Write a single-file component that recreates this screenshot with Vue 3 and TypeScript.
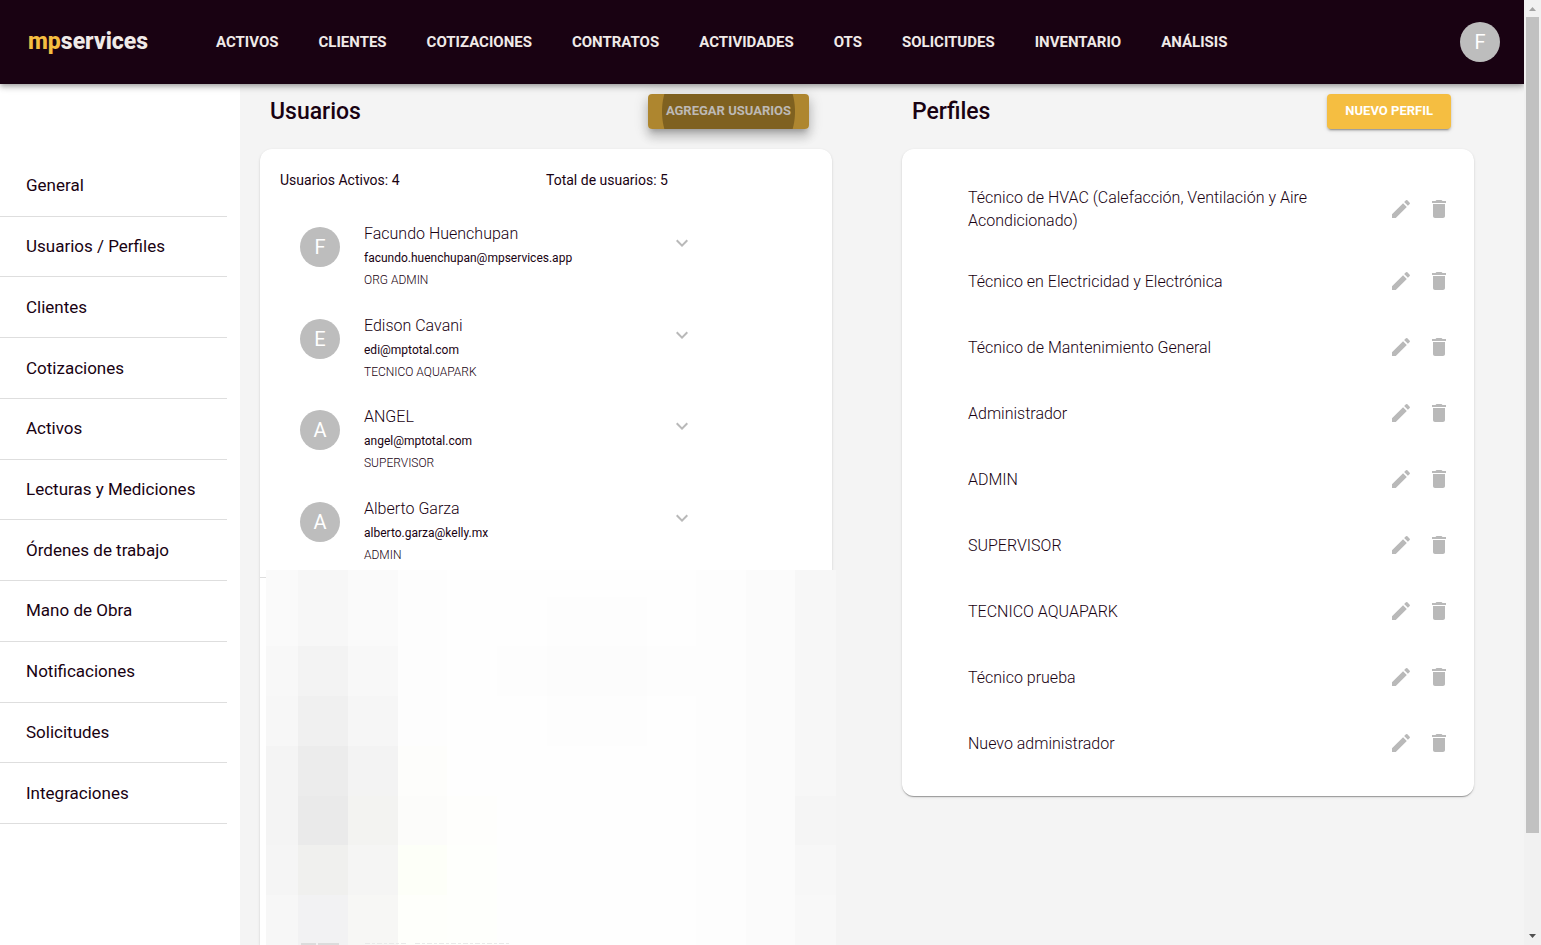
<script setup lang="ts">
interface User {
  name: string
  email: string
  role: string
}

interface Tile {
  x: number
  y: number
  w: number
  h: number
  fill: string
}

const navItems: string[] = [
  'ACTIVOS', 'CLIENTES', 'COTIZACIONES', 'CONTRATOS', 'ACTIVIDADES',
  'OTS', 'SOLICITUDES', 'INVENTARIO', 'ANÁLISIS',
]

const sideItems: string[] = [
  'General', 'Usuarios / Perfiles', 'Clientes', 'Cotizaciones', 'Activos',
  'Lecturas y Mediciones', 'Órdenes de trabajo', 'Mano de Obra',
  'Notificaciones', 'Solicitudes', 'Integraciones',
]

const users: User[] = [
  { name: 'Facundo Huenchupan', email: 'facundo.huenchupan@mpservices.app', role: 'ORG ADMIN' },
  { name: 'Edison Cavani', email: 'edi@mptotal.com', role: 'TECNICO AQUAPARK' },
  { name: 'ANGEL', email: 'angel@mptotal.com', role: 'SUPERVISOR' },
  { name: 'Alberto Garza', email: 'alberto.garza@kelly.mx', role: 'ADMIN' },
]

const profiles: string[] = [
  'Técnico de HVAC (Calefacción, Ventilación y Aire Acondicionado)',
  'Técnico en Electricidad y Electrónica',
  'Técnico de Mantenimiento General',
  'Administrador',
  'ADMIN',
  'SUPERVISOR',
  'TECNICO AQUAPARK',
  'Técnico prueba',
  'Nuevo administrador',
]

// Mosaic that hides the inactive user: column and row edges, then one colour per cell.
const colEdges = [0, 32, 82, 132, 181, 231, 281, 381, 430, 480, 529, 570]
const rowEdges = [0, 27, 76, 126, 176, 226, 275, 325, 375]
const cells: string[][] = [
  ['#fafafa', '#f7f7f7', '#fafafa', '#fdfdfd', '#fefefe', '#fefefe', '#fefefe', '#fefefe', '#fdfdfd', '#fbfbfb', '#f7f7f7'],
  ['#fafafa', '#f7f7f7', '#fafafa', '#fdfdfd', '#fefefe', '#fefefe', '#fdfdfd', '#fefefe', '#fdfdfd', '#fbfbfb', '#f7f7f7'],
  ['#f8f8f8', '#f3f3f3', '#f8f8f8', '#fdfdfd', '#fefefe', '#fdfdfd', '#fcfcfc', '#fdfdfd', '#fdfdfd', '#fbfbfb', '#f7f7f7'],
  ['#f7f7f7', '#f0f0f0', '#f6f6f6', '#fdfdfd', '#fefefe', '#fefefe', '#fdfdfd', '#fefefe', '#fdfdfd', '#fbfbfb', '#f7f7f7'],
  ['#f4f4f4', '#ececec', '#f3f3f3', '#fdfdfb', '#fefefe', '#fefefe', '#fefefe', '#fefefe', '#fdfdfd', '#fbfbfb', '#f7f7f7'],
  ['#f4f4f4', '#eaeaea', '#f3f3f1', '#fcfcfa', '#fefefc', '#fefefe', '#fefefe', '#fefefe', '#fdfdfd', '#fbfbfb', '#f5f5f5'],
  ['#f5f5f5', '#f0f0ee', '#f5f5f4', '#fdfff8', '#fefffc', '#fefefe', '#fefefe', '#fefefe', '#fdfdfd', '#fbfbfb', '#f7f7f7'],
  ['#f7f7f7', '#f2f2f3', '#f7f7f5', '#fefffb', '#fefffc', '#fefefe', '#fefefe', '#fefefe', '#fdfdfd', '#fbfbfb', '#f8f8f8'],
]

const tiles: Tile[] = cells.flatMap((row, r) =>
  row.map((fill, c) => ({
    x: colEdges[c],
    y: rowEdges[r],
    w: colEdges[c + 1] - colEdges[c],
    h: rowEdges[r + 1] - rowEdges[r],
    fill,
  })),
)
</script>

<template>
  <div class="shell">
    <div class="app">
      <header class="topbar">
        <a class="logo" href="#"><span class="logo-mark">mp</span>services</a>
        <nav class="nav" aria-label="Principal">
          <a v-for="item in navItems" :key="item" href="#">{{ item }}</a>
        </nav>
        <button class="avatar account" type="button" aria-label="Cuenta">F</button>
      </header>

      <div class="body">
        <aside class="sidebar">
          <nav class="side-list" aria-label="Configuración">
            <a v-for="item in sideItems" :key="item" href="#">{{ item }}</a>
          </nav>
        </aside>

        <main class="main">
          <section class="panel">
            <div class="panel-head">
              <h2>Usuarios</h2>
              <button class="btn pressed" type="button">AGREGAR USUARIOS</button>
            </div>
            <div class="card users-card">
              <div class="stats">
                <span>Usuarios Activos: 4</span>
                <span>Total de usuarios: 5</span>
              </div>
              <ul class="users">
                <li v-for="user in users" :key="user.email">
                  <span class="avatar">{{ user.name[0] }}</span>
                  <div class="info">
                    <span class="name">{{ user.name }}</span>
                    <span class="email">{{ user.email }}</span>
                    <span class="role">{{ user.role }}</span>
                  </div>
                  <button class="icon-btn expand" type="button" :aria-label="'Ver ' + user.name">
                    <svg viewBox="0 0 24 24"><path d="M16.59 8.59 12 13.17 7.41 8.59 6 10l6 6 6-6z" /></svg>
                  </button>
                </li>
              </ul>
              <div class="inactive">
                <svg class="mosaic" viewBox="0 0 570 375" preserveAspectRatio="none" shape-rendering="crispEdges" aria-hidden="true">
                  <rect v-for="(t, i) in tiles" :key="i" :x="t.x" :y="t.y" :width="t.w" :height="t.h" :fill="t.fill" />
                  <path d="M35 373h15v2h-15zM52 373h21v2h-21z" fill="#dcdcdc" />
                  <path d="M99 373.500h42M149 373.500h94" fill="none" stroke="#e9e9e9" stroke-dasharray="5 2 3 2" />
                </svg>
              </div>
            </div>
          </section>

          <section class="panel">
            <div class="panel-head">
              <h2>Perfiles</h2>
              <button class="btn" type="button">NUEVO PERFIL</button>
            </div>
            <div class="card">
              <ul class="profiles">
                <li v-for="profile in profiles" :key="profile">
                  <span class="profile-name">{{ profile }}</span>
                  <button class="icon-btn" type="button" :aria-label="'Editar ' + profile">
                    <svg viewBox="0 0 24 24"><path d="M3 17.250V21h3.750L17.810 9.940l-3.750-3.750L3 17.250zM20.710 7.040c.39-.39.39-1.020 0-1.410l-2.340-2.340a1 1 0 0 0-1.410 0l-1.830 1.830 3.750 3.750 1.830-1.830z" /></svg>
                  </button>
                  <button class="icon-btn" type="button" :aria-label="'Eliminar ' + profile">
                    <svg viewBox="0 0 24 24"><path d="M6 19c0 1.100.9 2 2 2h8c1.100 0 2-.9 2-2V7H6v12zM19 4h-3.500l-1-1h-5l-1 1H5v2h14V4z" /></svg>
                  </button>
                </li>
              </ul>
            </div>
          </section>
        </main>
      </div>
    </div>

    <div class="scrollbar" aria-hidden="true">
      <svg viewBox="0 0 17 17"><path d="M5 11l3.500-4 3.500 4z" fill="#a3a3a3" /></svg>
      <div class="track"><div class="thumb"></div></div>
      <svg viewBox="0 0 17 17"><path d="M5 6h7l-3.500 4z" fill="#505050" /></svg>
    </div>
  </div>
</template>

<style>
body {
  margin: 0;
  background: #f4f4f4;
}
</style>

<style scoped>
.shell {
  display: flex;
  height: 100vh;
  overflow: hidden;
  font-family: Roboto, "Liberation Sans", sans-serif;
  color: #190212;
}

.app {
  flex: 1;
  min-width: 0;
  display: flex;
  flex-direction: column;
  overflow: hidden;
}

a {
  color: inherit;
  text-decoration: none;
}

button {
  font-family: inherit;
  border: 0;
  padding: 0;
  cursor: pointer;
}

ul {
  list-style: none;
  margin: 0;
  padding: 0;
}

.topbar {
  position: relative;
  z-index: 2;
  flex: none;
  display: flex;
  align-items: center;
  height: 84px;
  padding: 0 24px 0 28px;
  background: #190212;
  color: #f0eae8;
  box-shadow: 0 2px 4px -1px rgba(0, 0, 0, 0.2), 0 4px 5px rgba(0, 0, 0, 0.14), 0 1px 10px rgba(0, 0, 0, 0.12);
}

.logo {
  width: 188px;
  font-size: 23px;
  font-weight: 800;
  line-height: 28px;
}

.logo-mark {
  color: #f5be41;
}

.nav {
  flex: 1;
  display: flex;
  gap: 40px;
  font-size: 15px;
  font-weight: 700;
  line-height: 24px;
}

.avatar {
  flex: none;
  width: 40px;
  height: 40px;
  border-radius: 50%;
  background: #bdbdbd;
  color: #fff;
  font-size: 20px;
  line-height: 40px;
  text-align: center;
}

.body {
  flex: 1;
  min-height: 0;
  display: flex;
}

.sidebar {
  flex: none;
  box-sizing: border-box;
  width: 240px;
  padding: 72px 13px 0 0;
  background: #fff;
}

.side-list {
  display: grid;
  grid-auto-rows: 1fr;
  height: 668px;
  font-size: 17px;
}

.side-list a {
  display: flex;
  align-items: center;
  padding: 0 0 1px 26px;
  border-bottom: 1px solid #dedede;
}

.main {
  flex: 1;
  min-width: 0;
  display: grid;
  grid-template-columns: 1fr 1fr;
  background: #f4f4f4;
}

.panel {
  display: flex;
  flex-direction: column;
  min-width: 0;
  padding: 10px 50px 0 20px;
}

.panel-head {
  display: flex;
  align-items: flex-start;
  justify-content: space-between;
  height: 55px;
  padding: 0 23px 0 10px;
}

h2 {
  margin: 0;
  font-size: 23px;
  font-weight: 500;
  line-height: 36px;
}

.btn {
  height: 35px;
  padding: 0 18px 2px;
  border-radius: 4px;
  background: #f5be41;
  color: #fff;
  font-size: 13px;
  font-weight: 700;
  line-height: 32px;
  box-shadow: 0 3px 1px -2px rgba(0, 0, 0, 0.2), 0 2px 2px rgba(0, 0, 0, 0.14), 0 1px 5px rgba(0, 0, 0, 0.12);
}

.btn.pressed {
  background: radial-gradient(circle, #7f6120 66px, #ae862f 67px);
  color: #bdb9b5;
  box-shadow: 0 5px 5px -3px rgba(0, 0, 0, 0.2), 0 8px 10px 1px rgba(0, 0, 0, 0.14), 0 3px 14px 2px rgba(0, 0, 0, 0.12);
}

.card {
  position: relative;
  border-radius: 12px;
  background: #fff;
  box-shadow: 0 2px 1px -1px rgba(0, 0, 0, 0.2), 0 1px 1px rgba(0, 0, 0, 0.14), 0 1px 3px rgba(0, 0, 0, 0.12);
}

.users-card {
  flex: 1;
  display: flex;
  flex-direction: column;
  border-radius: 12px 12px 0 0;
}

.stats {
  display: grid;
  grid-template-columns: 1fr 1fr;
  height: 61px;
  padding: 0 20px;
  font-size: 14px;
  line-height: 62px;
}

.users {
  display: grid;
  grid-auto-rows: 1fr;
  height: 366px;
  padding-bottom: 1px;
  border-bottom: 1px solid #dedede;
}

.users li {
  display: flex;
  align-items: flex-start;
  padding: 12px 138px 0 40px;
}

.users .avatar {
  margin-top: 5px;
}

.info {
  flex: 1;
  display: flex;
  flex-direction: column;
  padding-left: 24px;
}

.name {
  font-size: 16px;
  font-weight: 300;
  line-height: 24px;
}

.email {
  font-size: 12px;
  line-height: 24px;
}

.role {
  font-size: 12px;
  font-weight: 300;
  line-height: 20px;
}

.icon-btn {
  flex: none;
  width: 24px;
  height: 24px;
  background: none;
}

.icon-btn svg {
  display: block;
  fill: #b9b9b9;
}

.expand {
  margin-top: 9px;
}

.inactive {
  position: relative;
  flex: 1;
}

/* The mosaic lies over the divider and the card's right edge. */
.mosaic {
  position: absolute;
  top: -8px;
  left: 6px;
  width: calc(100% - 2px);
  height: 375px;
}

.profiles {
  padding: 21px 23px 20px 66px;
}

.profiles li {
  display: flex;
  align-items: center;
  gap: 14px;
  box-sizing: border-box;
  min-height: 66px;
  padding: 16px 0;
}

.profile-name {
  flex: 1;
  padding-right: 30px;
  font-size: 16px;
  font-weight: 300;
  line-height: 23px;
}

.scrollbar {
  flex: none;
  display: flex;
  flex-direction: column;
  width: 17px;
  background: #f1f1f1;
}

.scrollbar svg {
  display: block;
  width: 17px;
  height: 17px;
}

.track {
  flex: 1;
  padding: 0 2px;
}

.thumb {
  height: calc(100% - 95px);
  background: #c1c1c1;
}
</style>
